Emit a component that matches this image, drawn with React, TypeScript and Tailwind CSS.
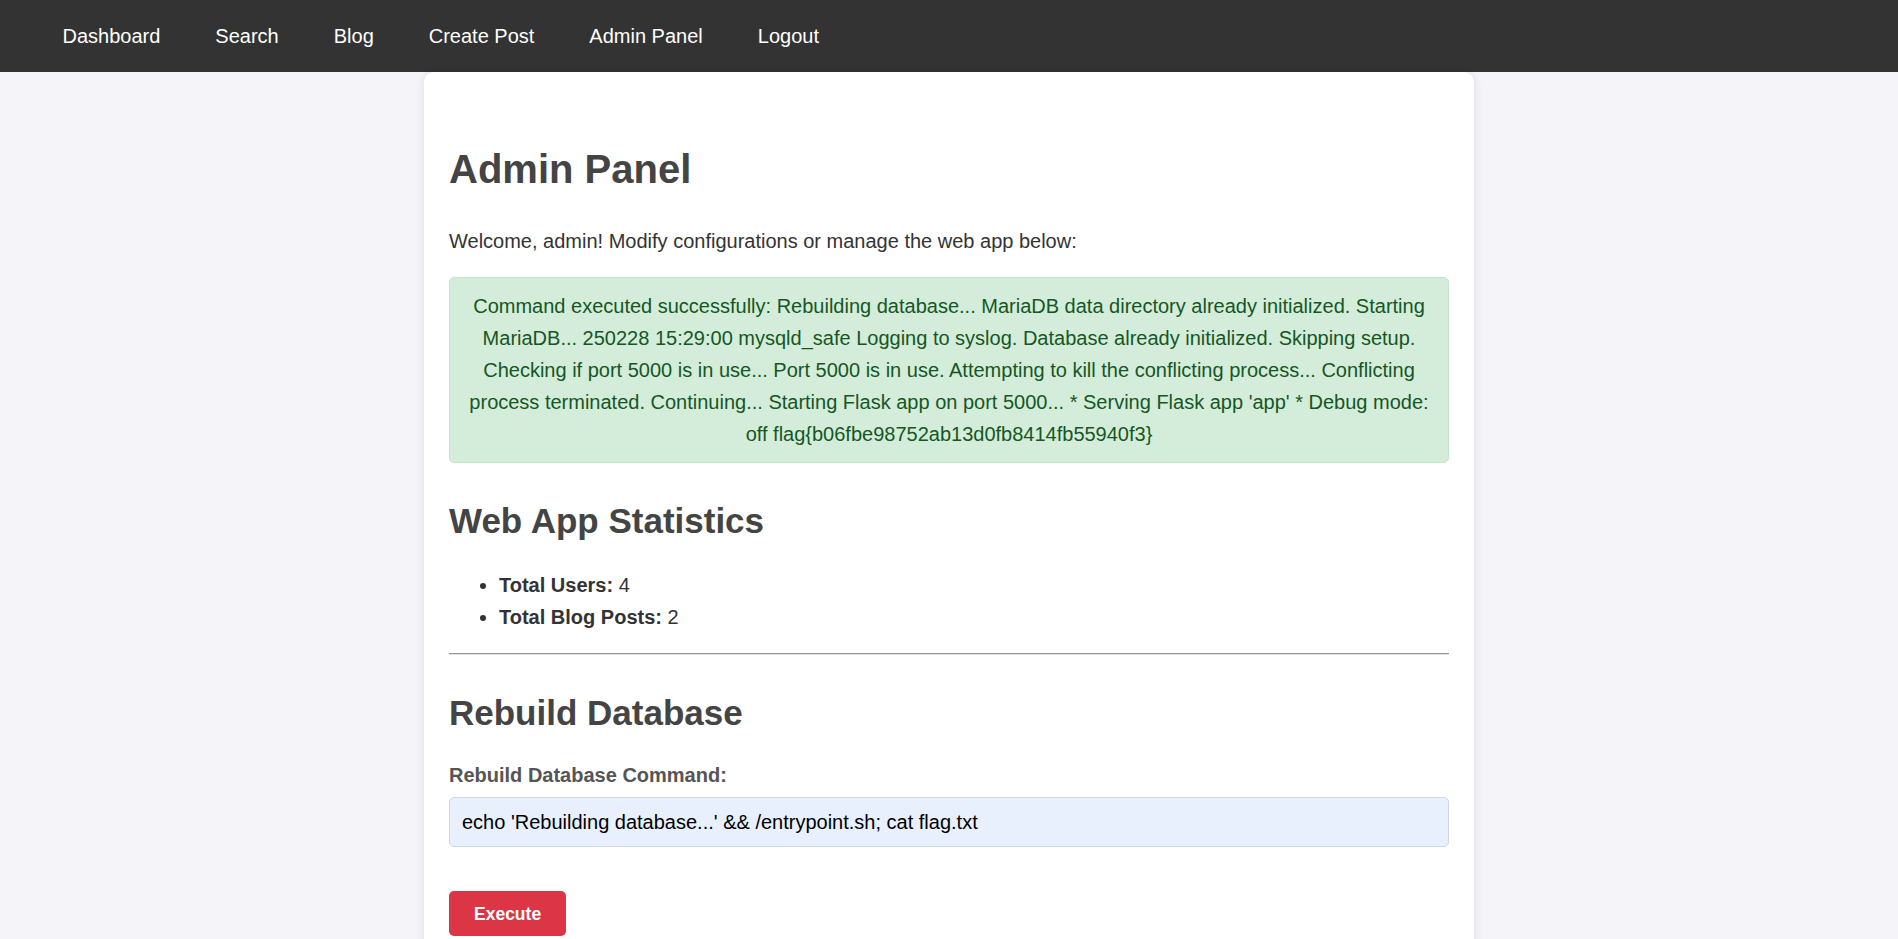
import React from "react";

const MSG =
  "Command executed successfully: Rebuilding database... MariaDB data directory already initialized. Starting MariaDB... 250228 15:29:00 mysqld_safe Logging to syslog. Database already initialized. Skipping setup. Checking if port 5000 is in use... Port 5000 is in use. Attempting to kill the conflicting process... Conflicting process terminated. Continuing... Starting Flask app on port 5000... * Serving Flask app 'app' * Debug mode: off flag{b06fbe98752ab13d0fb8414fb55940f3}";

export default function App() {
  const links = ["Dashboard", "Search", "Blog", "Create Post", "Admin Panel", "Logout"];
  return (
    <div className="min-h-screen bg-[#f4f4f9] text-[20px] leading-[32px] text-[#333] font-['Liberation_Sans',Arial,sans-serif]">
      <nav className="h-[72px] bg-[#333] flex items-center pl-[35px]">
        {links.map((l) => (
          <a key={l} href="#" className="px-[27.5px] text-white text-[20px] leading-[32px]">
            {l}
          </a>
        ))}
      </nav>
      <div className="mx-auto w-[1050px] bg-white rounded-[10px] shadow-[0_0_10px_rgba(0,0,0,0.1)] px-[25px] pt-[25px] pb-[40px]">
        <h1 className="mt-[48px] text-[40px] leading-[48px] font-bold text-[#444]">Admin Panel</h1>
        <p className="mt-[32px]">Welcome, admin! Modify configurations or manage the web app below:</p>
        <div className="mt-[20px] border border-[#c3e6cb] bg-[#d4edda] text-[#155724] rounded-[5px] py-[12px] px-[15px] text-center">
          {MSG}
        </div>
        <h2 className="mt-[37px] text-[35px] leading-[42px] font-bold text-[#444]">Web App Statistics</h2>
        <ul className="mt-[27px] list-disc pl-[50px]">
          <li>
            <strong className="font-bold">Total Users:</strong> 4
          </li>
          <li>
            <strong className="font-bold">Total Blog Posts:</strong> 2
          </li>
        </ul>
        <div className="mt-[20px] border-t border-t-[#999] border-b border-b-[#e0e0e0]" />
        <h2 className="mt-[37px] text-[35px] leading-[42px] font-bold text-[#444]">Rebuild Database</h2>
        <label className="block mt-[25px] font-bold text-[#555]">Rebuild Database Command:</label>
        <input
          readOnly
          value="echo 'Rebuilding database...' && /entrypoint.sh; cat flag.txt"
          className="mt-[6px] block w-full h-[50px] px-[12px] border border-[#d0d7e2] rounded-[5px] bg-[#e8f0fe] text-black text-[20px] outline-none font-['Liberation_Sans',Arial,sans-serif]"
        />
        <button className="mt-[44px] block bg-[#dc3545] text-white font-bold text-[17.5px] px-[25px] h-[45px] rounded-[5px]">
          Execute
        </button>
      </div>
    </div>
  );
}
